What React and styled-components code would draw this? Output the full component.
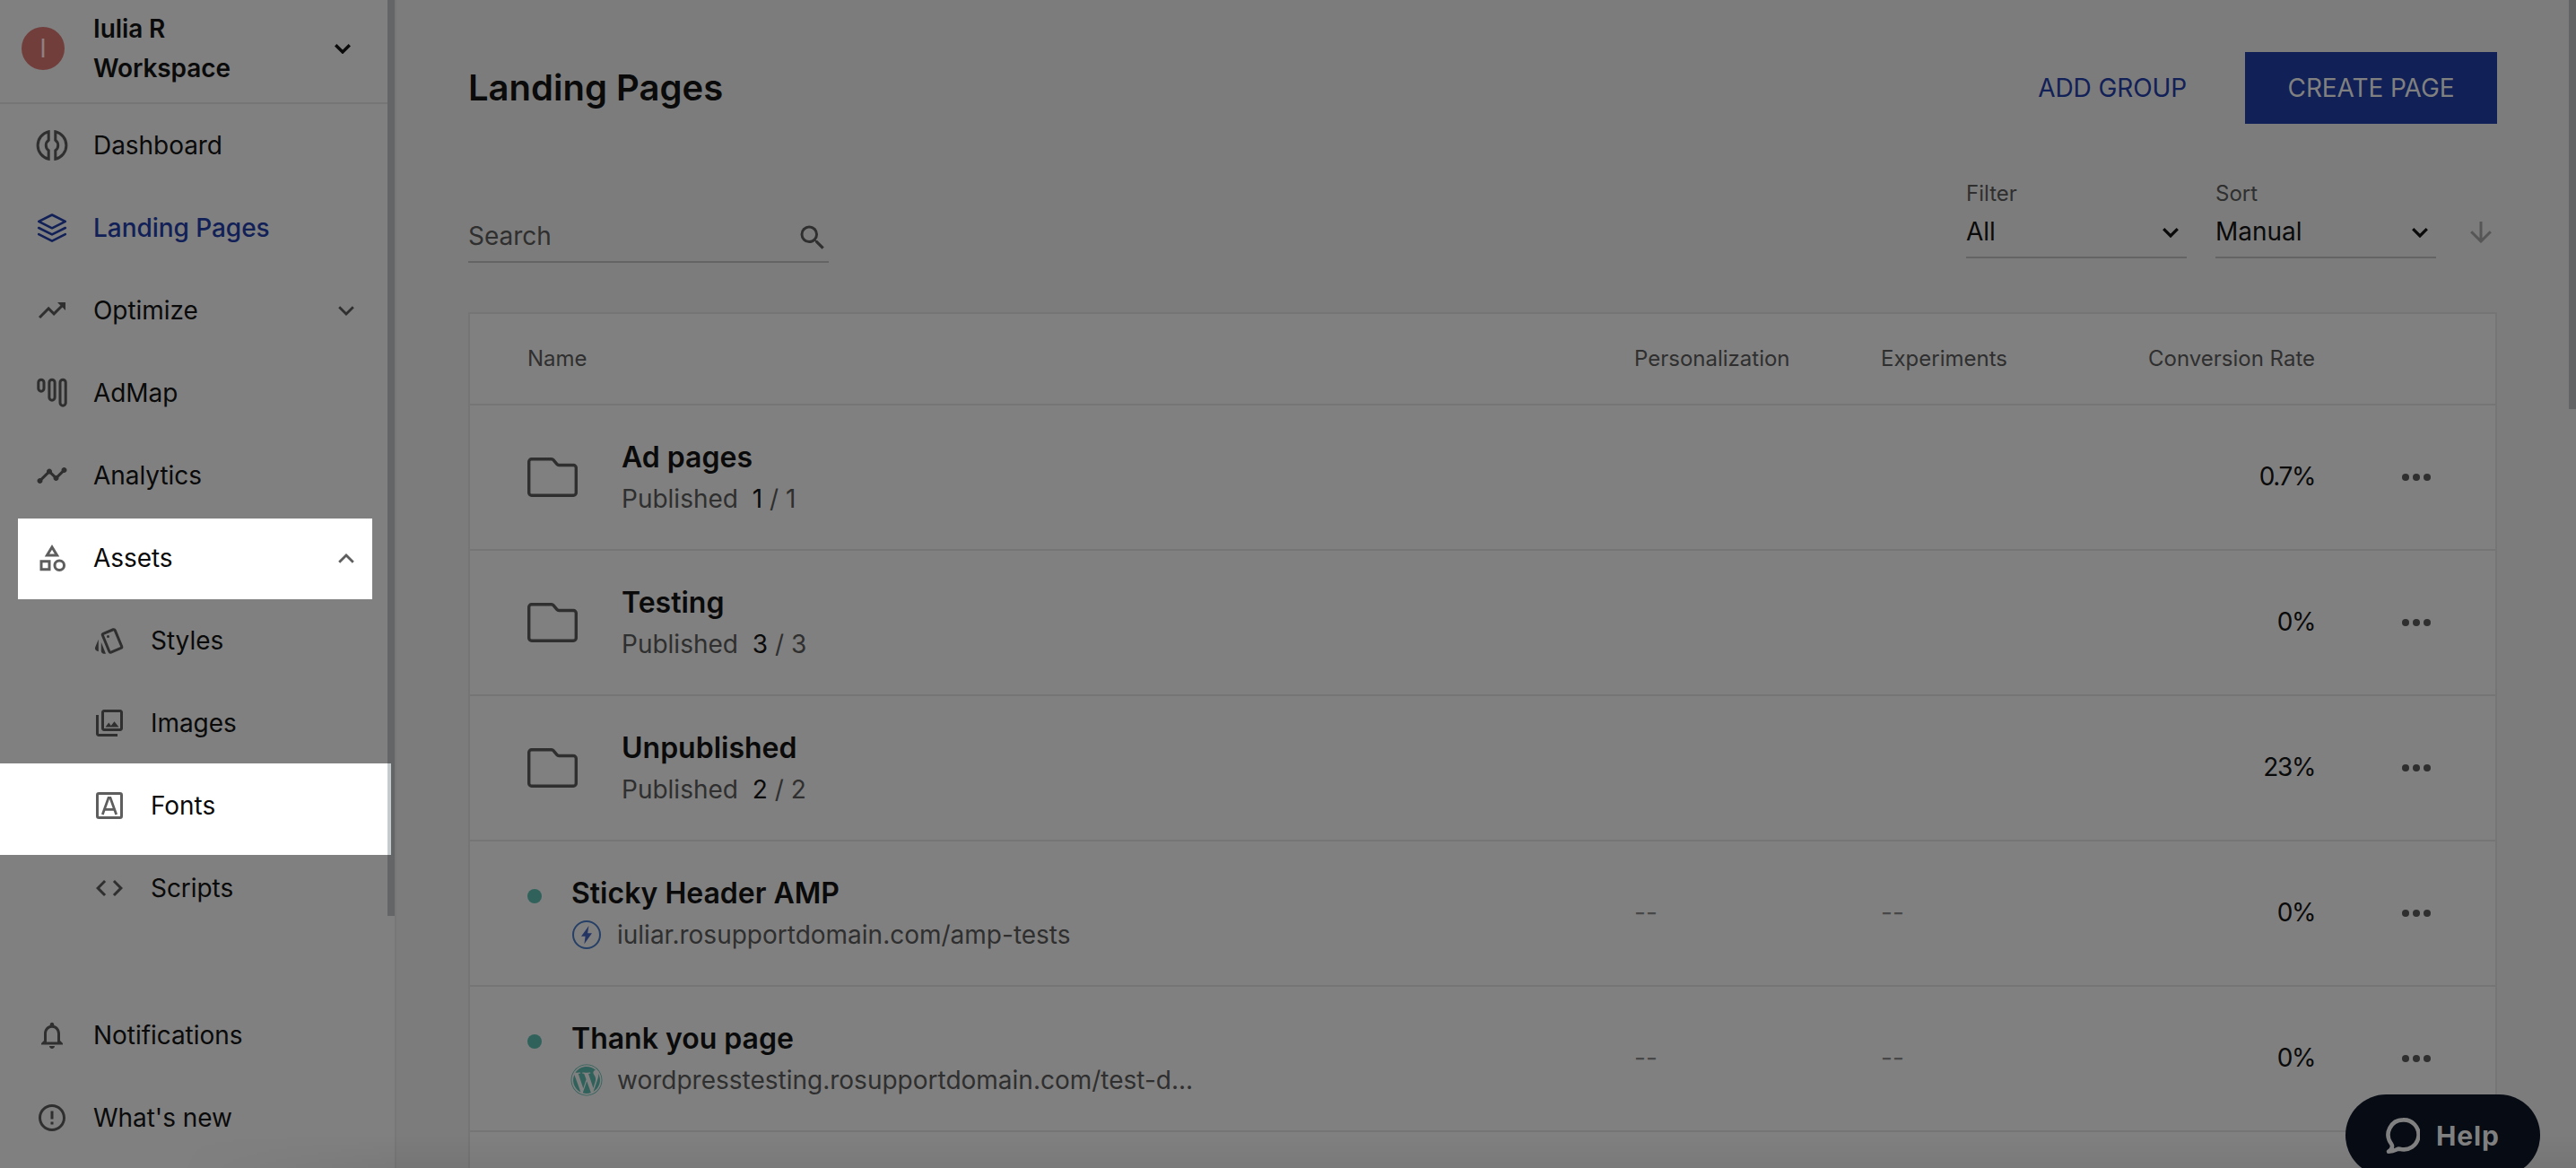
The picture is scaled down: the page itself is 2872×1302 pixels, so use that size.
import styled, { createGlobalStyle } from 'styled-components';
import {
  MdTrendingUp,
  MdTimeline,
  MdOutlineCategory,
  MdOutlineStyle,
  MdOutlinePhotoLibrary,
  MdCode,
  MdNotificationsNone,
  MdErrorOutline,
  MdSearch,
} from 'react-icons/md';
import { FaWordpress } from 'react-icons/fa';

const mainItems = [
  { label: 'Dashboard', icon: <DashboardIcon /> },
  { label: 'Landing Pages', icon: <LayersIcon />, active: true },
  { label: 'Optimize', icon: <MdTrendingUp />, chevron: 'down' },
  { label: 'AdMap', icon: <AdMapIcon /> },
  { label: 'Analytics', icon: <MdTimeline /> },
  { label: 'Assets', icon: <MdOutlineCategory />, chevron: 'up', spotlight: 'inset' },
];

const assetItems = [
  { label: 'Styles', icon: <MdOutlineStyle /> },
  { label: 'Images', icon: <MdOutlinePhotoLibrary /> },
  { label: 'Fonts', icon: <FontsIcon />, spotlight: 'full' },
  { label: 'Scripts', icon: <MdCode /> },
];

const footerItems = [
  { label: 'Notifications', icon: <MdNotificationsNone /> },
  { label: "What's new", icon: <MdErrorOutline /> },
];

const groups = [
  { name: 'Ad pages', published: 1, total: 1, rate: '0.7%' },
  { name: 'Testing', published: 3, total: 3, rate: '0%' },
  { name: 'Unpublished', published: 2, total: 2, rate: '23%' },
];

const pages = [
  { name: 'Sticky Header AMP', url: 'iuliar.rosupportdomain.com/amp-tests', type: 'amp', rate: '0%' },
  { name: 'Thank you page', url: 'wordpresstesting.rosupportdomain.com/test-d...', type: 'wordpress', rate: '0%' },
];

export default function App() {
  return (
    <>
      <GlobalStyle />
      <Page>
        <Sidebar>
          <Workspace>
            <Avatar>I</Avatar>
            <WorkspaceName>
              Iulia R<br />
              Workspace
            </WorkspaceName>
            <Chevron size={18} weight={3.4} />
          </Workspace>
          <Nav>
            {mainItems.map((item) => (
              <NavEntry key={item.label} item={item} />
            ))}
            {assetItems.map((item) => (
              <NavEntry key={item.label} item={item} nested />
            ))}
          </Nav>
          <Nav>
            {footerItems.map((item) => (
              <NavEntry key={item.label} item={item} />
            ))}
          </Nav>
          <SidebarScroll />
          <SpotlightEdge />
        </Sidebar>
        <Main>
          <TopBar>
            <Title>Landing Pages</Title>
            <Actions>
              <TextButton>ADD GROUP</TextButton>
              <PrimaryButton>CREATE PAGE</PrimaryButton>
            </Actions>
          </TopBar>
          <Toolbar>
            <Search>
              Search
              <MdSearch />
            </Search>
            <Selects>
              <SelectField label="Filter" value="All" />
              <SelectField label="Sort" value="Manual" />
              <SortArrow />
            </Selects>
          </Toolbar>
          <Table>
            <HeaderRow>
              <span>Name</span>
              <span>Personalization</span>
              <span>Experiments</span>
              <RightCell>Conversion Rate</RightCell>
            </HeaderRow>
            {groups.map((group) => (
              <Row key={group.name}>
                <GroupCell>
                  <FolderIcon />
                  <RowText>
                    <RowName>{group.name}</RowName>
                    <RowDetail>
                      Published <Count>{group.published}</Count> / {group.total}
                    </RowDetail>
                  </RowText>
                </GroupCell>
                <span />
                <span />
                <Rate>{group.rate}</Rate>
                <MoreIcon />
              </Row>
            ))}
            {pages.map((page) => (
              <Row key={page.name}>
                <PageCell>
                  <StatusDot />
                  <RowText>
                    <RowName>{page.name}</RowName>
                    <PageLink>
                      <PageType>{page.type === 'amp' ? <AmpIcon /> : <FaWordpress size={36} />}</PageType>
                      {page.url}
                    </PageLink>
                  </RowText>
                </PageCell>
                <Empty>--</Empty>
                <Empty>--</Empty>
                <Rate>{page.rate}</Rate>
                <MoreIcon />
              </Row>
            ))}
          </Table>
        </Main>
        <PageScroll />
        <BottomShade />
        <HelpButton>
          <HelpIcon />
          Help
        </HelpButton>
      </Page>
    </>
  );
}

function NavEntry({ item, nested }) {
  return (
    <NavItem $nested={nested} $active={item.active} $spotlight={item.spotlight}>
      <NavIcon $active={item.active} $spotlight={item.spotlight}>
        {item.icon}
      </NavIcon>
      <NavLabel>{item.label}</NavLabel>
      {item.chevron && (
        <NavIcon $spotlight={item.spotlight}>
          <Chevron size={18} weight={2.8} up={item.chevron === 'up'} />
        </NavIcon>
      )}
    </NavItem>
  );
}

function SelectField({ label, value }) {
  return (
    <Field>
      <FieldLabel>{label}</FieldLabel>
      <FieldValue>
        {value}
        <Chevron size={18} weight={3.2} />
      </FieldValue>
    </Field>
  );
}

function Chevron({ size, weight, up }) {
  return (
    <ChevronSvg $size={size} viewBox="0 0 18 11" fill="none">
      <path d={up ? 'M1.2 9.8L9 2l7.8 7.8' : 'M1.2 1.2L9 9l7.8-7.8'} stroke="currentColor" strokeWidth={weight} />
    </ChevronSvg>
  );
}

function DashboardIcon() {
  return (
    <svg viewBox="0 0 36 36" fill="none" stroke="currentColor" strokeWidth="3">
      <path d="M14.200 2.800a15.600 15.600 0 0 0 0 30.400V23.800a7.200 7.200 0 0 1 0-11.600z" />
      <path d="M21.800 2.800a15.600 15.600 0 0 1 0 30.400V23.800a7.200 7.200 0 0 0 0-11.600z" />
    </svg>
  );
}

function LayersIcon() {
  return (
    <svg viewBox="0 0 36 36" fill="none" stroke="currentColor" strokeWidth="2.6" strokeLinejoin="round" strokeLinecap="round">
      <path d="M18 3.500L32.800 10.900 18 18.300 3.200 10.900z" />
      <path d="M3.200 18L18 25.400 32.800 18" />
      <path d="M3.200 25.200L18 32.600 32.800 25.200" />
    </svg>
  );
}

function AdMapIcon() {
  return (
    <svg viewBox="0 0 36 36" fill="none" stroke="currentColor" strokeWidth="3">
      <rect x="2.800" y="3.200" width="6.200" height="13" rx="3.100" />
      <rect x="14.900" y="3.200" width="6.200" height="23" rx="3.100" />
      <rect x="27" y="3.200" width="6.200" height="29" rx="3.100" />
    </svg>
  );
}

function FontsIcon() {
  return (
    <svg viewBox="0 0 36 36" fill="none" stroke="currentColor" strokeWidth="3">
      <rect x="4.500" y="4.500" width="27" height="27" rx="1.800" />
      <path d="M10.300 28L17 9.300h2L25.700 28M12.600 22.300h10.800" strokeWidth="2.800" />
    </svg>
  );
}

function FolderIcon() {
  return (
    <svg width="56" height="44" viewBox="0 0 56 44" fill="none" stroke="#2f2f2f" strokeWidth="3.400">
      <path d="M4.700 1.700h22.300c.8 0 1.400.3 1.900.9l4 4.800c.6.700 1.300 1.100 2.200 1.100h16.200a3 3 0 0 1 3 3v27.800a3 3 0 0 1-3 3H4.700a3 3 0 0 1-3-3V4.700a3 3 0 0 1 3-3z" />
    </svg>
  );
}

function AmpIcon() {
  return (
    <svg width="32" height="32" viewBox="0 0 32 32" fill="none">
      <circle cx="16" cy="16" r="15" stroke="#263f66" strokeWidth="2" />
      <path d="M18.500 6L10 17.800h4.600L13.400 26.200 22 14.200h-4.900z" fill="#243564" />
    </svg>
  );
}

function MoreIcon() {
  return (
    <svg width="32" height="8" viewBox="0 0 32 8" fill="#2f2f2f">
      <circle cx="4" cy="4" r="4" />
      <circle cx="16" cy="4" r="4" />
      <circle cx="28" cy="4" r="4" />
    </svg>
  );
}

function SortArrow() {
  return (
    <ArrowSvg width="24" height="24" viewBox="0 0 24 24" fill="none" stroke="#565656" strokeWidth="3">
      <path d="M12 0v22M1.200 11.200L12 22l10.800-10.800" />
    </ArrowSvg>
  );
}

function HelpIcon() {
  return (
    <svg width="38" height="40" viewBox="0 0 38 40" fill="none" stroke="#808080" strokeWidth="4.600" strokeLinejoin="round">
      <path d="M19 2.400a16.500 16.500 0 1 1-3.600 32.300c-1.300-.2-2.400.2-3.600.8-2.400 1.300-5.400 2.200-8.800 2.200 2.600-1.700 4.300-3.600 4-6.500-.1-1-.7-1.800-1.300-2.700A16.500 16.500 0 0 1 19 2.400z" />
    </svg>
  );
}

const GlobalStyle = createGlobalStyle`
  * {
    box-sizing: border-box;
  }

  body {
    margin: 0;
    overflow: hidden;
    font-family: Inter, 'Liberation Sans', sans-serif;
    font-size: 28px;
    color: #0a0a0a;
    background: #7c7c7c;
  }
`;

const Page = styled.div`
  display: flex;
  width: 100vw;
  height: 100vh;
  position: relative;
  overflow: hidden;
`;

const Sidebar = styled.aside`
  display: flex;
  flex-direction: column;
  justify-content: space-between;
  width: 442px;
  flex-shrink: 0;
  padding-bottom: 10px;
  position: relative;
  background: #808080;
  border-right: 2px solid #777777;
`;

const Workspace = styled.div`
  display: flex;
  align-items: center;
  height: 116px;
  padding: 0 49px 6px 24px;
  border-bottom: 2px solid #757575;
`;

const Avatar = styled.div`
  display: flex;
  justify-content: center;
  align-items: center;
  width: 48px;
  height: 48px;
  border-radius: 50%;
  font-size: 28px;
  color: #8f8080;
  background: #713e3c;
`;

const WorkspaceName = styled.div`
  flex: 1;
  margin-left: 32px;
  padding-bottom: 1px;
  font-weight: 600;
  line-height: 44px;
  letter-spacing: -0.1px;
`;

const Nav = styled.nav`
  display: flex;
  flex-direction: column;

  &:first-of-type {
    flex: 1;
  }
`;

const NavItem = styled.a`
  display: flex;
  align-items: center;
  height: 92px;
  padding-left: ${(props) => (props.$nested ? '104px' : '40px')};
  padding-right: 45px;
  position: relative;
  z-index: 0;
  color: ${(props) => (props.$active ? '#112057' : '#0a0a0a')};
  font-weight: ${(props) => (props.$active ? 500 : 400)};

  &::before {
    content: '';
    display: ${(props) => (props.$spotlight ? 'block' : 'none')};
    position: absolute;
    top: ${(props) => (props.$spotlight === 'full' ? '-1px' : '2px')};
    left: ${(props) => (props.$spotlight === 'full' ? '0' : '20px')};
    width: ${(props) => (props.$spotlight === 'full' ? '436px' : '395px')};
    height: ${(props) => (props.$spotlight === 'full' ? '102px' : '90px')};
    z-index: -1;
    background: #ffffff;
  }
`;

const NavIcon = styled.span`
  display: flex;
  color: ${(props) => (props.$active ? '#112057' : props.$spotlight ? '#5e5e5e' : '#2f2f2f')};

  svg {
    width: 36px;
    height: 36px;
  }
`;

const NavLabel = styled.span`
  flex: 1;
  margin-left: 28px;
  letter-spacing: -0.05px;
`;

const ChevronSvg = styled.svg`
  && {
    width: ${(props) => props.$size}px;
    height: ${(props) => (props.$size * 11) / 18}px;
  }
`;

const SidebarScroll = styled.div`
  position: absolute;
  top: 0;
  right: 0;
  width: 8px;
  height: 1021px;
  background: #646566;
`;

const SpotlightEdge = styled.div`
  position: absolute;
  top: 851px;
  right: 4px;
  width: 4px;
  height: 102px;
  background: #c5cacd;
`;

const Main = styled.main`
  display: flex;
  flex-direction: column;
  flex: 1;
  padding: 58px 88px 0 80px;
`;

const TopBar = styled.header`
  display: flex;
  justify-content: space-between;
  align-items: center;
  flex-shrink: 0;
  height: 80px;
`;

const Title = styled.h1`
  margin: 0;
  padding-bottom: 2px;
  font-size: 40px;
  font-weight: 600;
`;

const Actions = styled.div`
  display: flex;
  align-items: center;
  gap: 65px;
`;

const TextButton = styled.button`
  padding: 0;
  border: none;
  font: inherit;
  letter-spacing: -0.1px;
  color: #112057;
  background: none;
`;

const PrimaryButton = styled.button`
  width: 281px;
  height: 80px;
  padding: 0;
  border: none;
  font: inherit;
  letter-spacing: -0.1px;
  color: #808080;
  background: #112057;
`;

const Toolbar = styled.div`
  display: flex;
  justify-content: space-between;
  align-items: flex-start;
  flex-shrink: 0;
  height: 210px;
  padding-top: 60px;
`;

const Search = styled.div`
  display: flex;
  justify-content: space-between;
  align-items: center;
  width: 402px;
  height: 62px;
  margin-top: 33px;
  padding-top: 4px;
  border-bottom: 2px solid #646464;
  color: #2f2f2f;

  svg {
    width: 36px;
    height: 36px;
    margin-top: 3px;
  }
`;

const Selects = styled.div`
  display: flex;
  gap: 32px;
`;

const Field = styled.div`
  width: 246px;
  height: 90px;
  border-bottom: 2px solid #646464;
`;

const FieldLabel = styled.div`
  font-size: 24px;
  line-height: 36px;
  color: #2f2f2f;
`;

const FieldValue = styled.div`
  display: flex;
  justify-content: space-between;
  align-items: center;
  padding: 2px 9px 0 0;
  line-height: 44px;

  svg {
    margin-top: 2px;
  }
`;

const ArrowSvg = styled.svg`
  margin: 49px 6px 0 6px;
`;

const Table = styled.section`
  height: 1100px;
  flex-shrink: 0;
  border: 2px solid #757575;
  background: #808080;
`;

const HeaderRow = styled.div`
  display: grid;
  grid-template-columns: 1234px 275px 250px 235px;
  align-items: center;
  height: 102px;
  padding: 0 0 2px 64px;
  border-bottom: 2px solid #757575;
  font-size: 24px;
  color: #2f2f2f;
`;

const Row = styled.div`
  display: grid;
  grid-template-columns: 1234px 275px 250px 235px 32px;
  align-items: center;
  height: 162px;
  padding-left: 64px;
  border-bottom: 2px solid #757575;

  > svg {
    margin-left: 96px;
  }
`;

const RightCell = styled.span`
  padding-right: 1px;
  text-align: right;
`;

const GroupCell = styled.div`
  display: flex;
  align-items: center;
  gap: 48px;
`;

const PageCell = styled.div`
  display: flex;
  gap: 32px;
`;

const RowText = styled.div`
  padding: 2px 0 0 1px;
`;

const StatusDot = styled.span`
  width: 16px;
  height: 16px;
  margin-top: 20px;
  border-radius: 50%;
  background: #30625b;
`;

const RowName = styled.div`
  font-size: 32px;
  font-weight: 600;
  line-height: 46px;
`;

const RowDetail = styled.div`
  line-height: 46px;
  color: #2f2f2f;
`;

const Count = styled.span`
  margin-left: 8px;
  color: #0a0a0a;
`;

const PageLink = styled(RowDetail)`
  display: flex;
  align-items: center;
  gap: 16px;
  margin-left: -1px;
`;

const PageType = styled.span`
  display: flex;
  justify-content: center;
  width: 36px;
  color: #30625b;
`;

const Rate = styled.span`
  padding: 0 1px 2px 0;
  text-align: right;
  letter-spacing: -1.4px;
`;

const Empty = styled.span`
  padding-bottom: 2px;
  color: #474747;
`;

const PageScroll = styled.div`
  position: absolute;
  top: 0;
  right: 0;
  width: 8px;
  height: 456px;
  background: #626466;
`;

const BottomShade = styled.div`
  position: absolute;
  left: 200px;
  right: 0;
  bottom: 0;
  height: 36px;
  background: linear-gradient(to bottom, rgba(0, 0, 0, 0), rgba(0, 0, 0, 0.05));
  mask-image: linear-gradient(to right, transparent, #000000 240px);
`;

const HelpButton = styled.button`
  display: flex;
  align-items: center;
  gap: 18px;
  position: absolute;
  top: 1220px;
  right: 40px;
  width: 217px;
  height: 91px;
  padding: 0 0 0 45px;
  border: none;
  border-radius: 46px;
  font-family: inherit;
  font-size: 30px;
  font-weight: 700;
  letter-spacing: 0.9px;
  color: #808080;
  background: #060b14;
`;
